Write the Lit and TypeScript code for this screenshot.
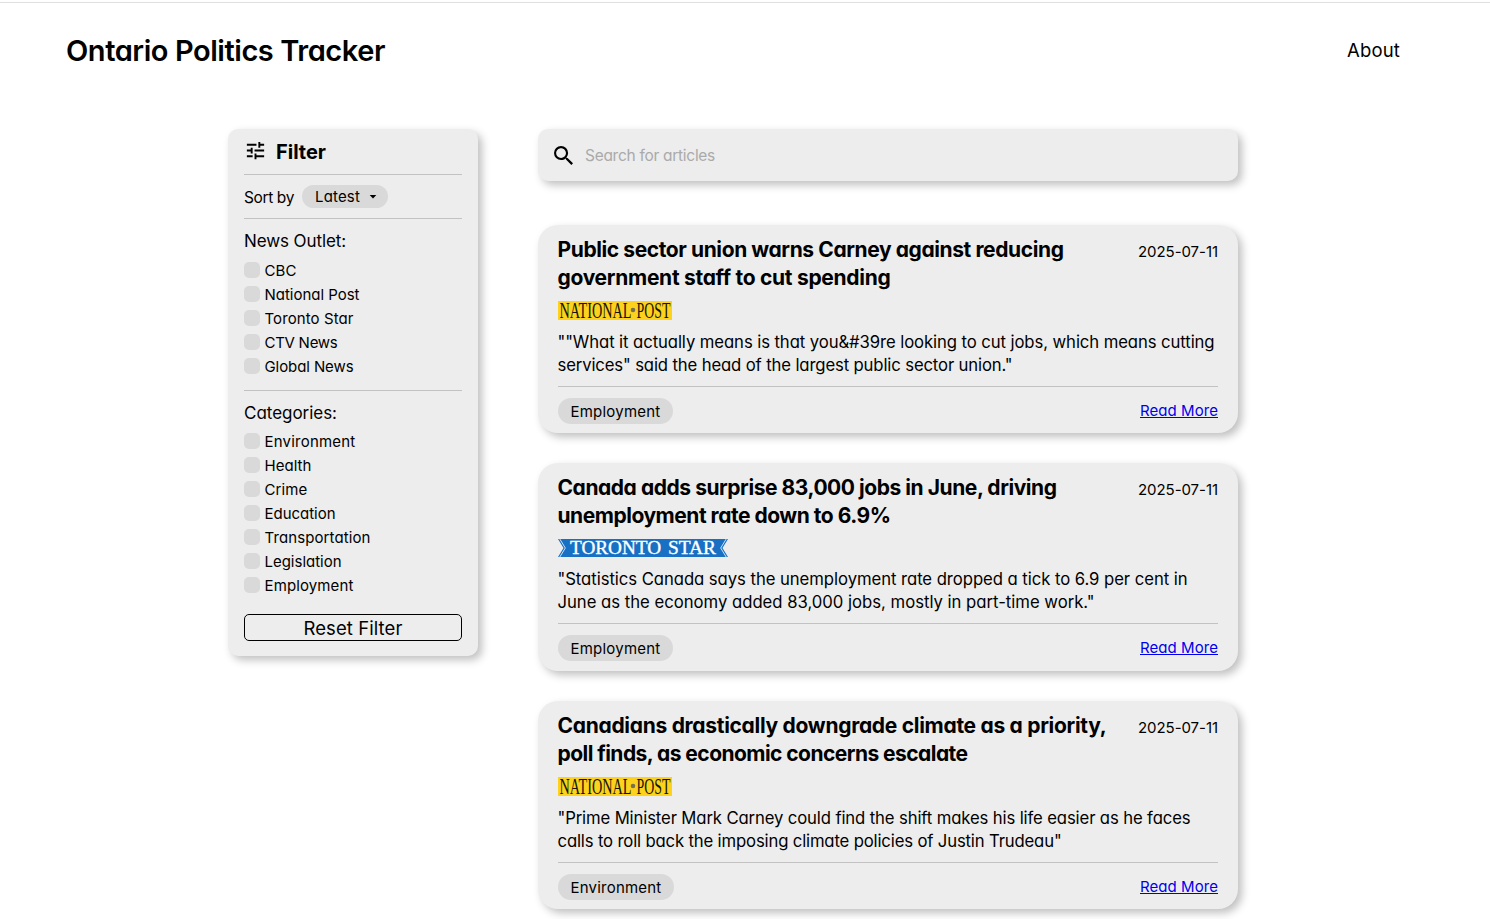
import { LitElement, html, css } from "lit";
import { customElement, property } from "lit/decorators.js";

/* One line of text set to an exact measure by adjusting its tracking. */
@customElement("fit-text")
class FitText extends LitElement {
  @property({ type: Number }) w = 0;
  @property() text = "";
  static styles = css`
    :host { display: block; white-space: nowrap; }
    .run { display: inline-block; white-space: pre; text-decoration: inherit; }
  `;
  updated() {
    const run = this.renderRoot.querySelector(".run") as HTMLElement;
    run.style.letterSpacing = "0px";
    const natural = run.getBoundingClientRect().width;
    const gap = (this.w - natural) / this.text.length;
    run.style.letterSpacing = gap.toFixed(3) + "px";
  }
  render() {
    return html`<span class="run">${this.text}</span>`;
  }
}

type Line = [string, number];
interface Article {
  title: Line[];
  outlet: "post" | "star";
  body: Line[];
  tag: Line;
}

const line = ([text, w]: Line) => html`<fit-text .text=${text} .w=${w}></fit-text>`;

const outlets: Line[] = [["CBC", 32], ["National Post", 95], ["Toronto Star", 89], ["CTV News", 73], ["Global News", 89]];
const categories: Line[] = [
  ["Environment", 91], ["Health", 47], ["Crime", 43], ["Education", 71],
  ["Transportation", 106], ["Legislation", 77], ["Employment", 89],
];
const articles: Article[] = [
  {
    title: [["Public sector union warns Carney against reducing", 506], ["government staff to cut spending", 333]],
    outlet: "post",
    body: [[`""What it actually means is that you&#39re looking to cut jobs, which means cutting`, 657], [`services" said the head of the largest public sector union."`, 455]],
    tag: ["Employment", 90],
  },
  {
    title: [["Canada adds surprise 83,000 jobs in June, driving", 499], ["unemployment rate down to 6.9%", 333]],
    outlet: "star",
    body: [[`"Statistics Canada says the unemployment rate dropped a tick to 6.9 per cent in`, 630], [`June as the economy added 83,000 jobs, mostly in part-time work."`, 537]],
    tag: ["Employment", 90],
  },
  {
    title: [["Canadians drastically downgrade climate as a priority,", 549], ["poll finds, as economic concerns escalate", 410]],
    outlet: "post",
    body: [[`"Prime Minister Mark Carney could find the shift makes his life easier as he faces`, 633], [`calls to roll back the imposing climate policies of Justin Trudeau"`, 504]],
    tag: ["Environment", 91],
  },
];

const postLogo = html`<svg class="logo" width="114" height="19" viewBox="0 0 114 19">
  <rect width="114" height="19" fill="#fcd21c"/>
  <g transform="scale(1 1.42)" fill="#16140a" font-family="Liberation Serif, serif" font-size="15.8">
    <text x="1.5" y="11.7" textLength="72" lengthAdjust="spacingAndGlyphs">NATIONAL</text>
    <text x="78.5" y="11.7" textLength="34" lengthAdjust="spacingAndGlyphs">POST</text>
  </g>
  <circle cx="75" cy="9" r="2.3" fill="#777151"/>
</svg>`;

const starLogo = html`<svg class="logo" width="170" height="18" viewBox="0 0 170 18">
  <path d="M0 0H170L164.500 9l5.500 9H0L5.500 9Z" fill="#1770c4"/>
  <path d="M1.800 0l5.500 9-5.500 9M168.200 0l-5.500 9 5.500 9" fill="none" stroke="#e4eef8" stroke-width=".9"/>
  <g fill="#fff" stroke="#fff" stroke-width=".35" font-family="Liberation Serif, serif" font-size="18">
    <text x="12" y="14.8" textLength="91" lengthAdjust="spacingAndGlyphs">TORONTO</text>
    <text x="110" y="14.8" textLength="48" lengthAdjust="spacingAndGlyphs">STAR</text>
  </g>
</svg>`;

@customElement("app-root")
class AppRoot extends LitElement {
  static styles = css`
    :host {
      display: block; height: 919px; overflow: hidden; background: #fff; color: #000;
      font-family: Inter, Lato, sans-serif; font-feature-settings: "cv11" 1;
      font-size: 15px; box-sizing: border-box; padding-top: 2px;
    }
    * { box-sizing: border-box; }
    header {
      height: 97px; border-top: 1px solid #dfdfdf; padding: 0 90px 0 66px;
      display: flex; justify-content: space-between; align-items: center;
    }
    .brand { font-size: 29px; font-weight: 600; line-height: 36px; }
    .about { font-size: 18.5px; line-height: 24px; margin-top: -2px; }
    main { display: flex; align-items: flex-start; gap: 60px; padding: 30px 0 0 228px; }
    .panel { background: #ededed; box-shadow: 4px 4px 8px rgba(0, 0, 0, .25); }
    .filter { width: 250px; height: 527px; border-radius: 10px; padding: 0 16px; }
    .head { height: 46px; display: flex; align-items: center; gap: 9px; border-bottom: 1px solid #c2c2c2; }
    .head svg { margin: -2px 0 0 0; }
    .head fit-text { font-size: 20px; font-weight: 700; }
    .sort { height: 44px; display: flex; align-items: center; gap: 8px; border-bottom: 1px solid #c2c2c2; }
    .sort > fit-text { font-size: 15.5px; padding-top: 2px; }
    .select {
      width: 86px; height: 23px; border-radius: 12px; background: #d9d9d9; margin-top: -1px;
      display: flex; align-items: center; gap: 9px; padding-left: 13px; line-height: 23px;
    }
    .select svg { margin-top: 2px; }
    .group { height: 172px; border-bottom: 1px solid #c2c2c2; padding-top: 10px; }
    .group.last { height: 223px; border: 0; }
    .label { font-size: 17px; line-height: 24px; margin-bottom: 5px; }
    .last .label { margin-bottom: 4px; }
    .check { height: 24px; display: flex; align-items: center; gap: 4.5px; line-height: 24px; }
    .box { width: 16px; height: 16px; border-radius: 5px; background: #d9d9d9; }
    .check fit-text { padding-top: 1px; }
    .reset {
      display: flex; justify-content: center; align-items: center; width: 218px; height: 27px;
      border: 1px solid #000; border-radius: 5px; background: transparent; color: #000; padding: 0;
      font: inherit; font-feature-settings: inherit; font-size: 18.5px;
    }
    .feed { width: 700px; display: flex; flex-direction: column; gap: 30px; }
    .search {
      height: 52px; border-radius: 10px; margin-bottom: 14px; padding-left: 16px;
      display: flex; align-items: center; gap: 12px; color: #aaa; font-size: 15.5px;
    }
    .search svg { color: #000; }
    .search fit-text { padding-top: 1px; }
    .card { height: 208px; border-radius: 20px; padding: 11px 20px 10px 19.5px; display: flex; flex-direction: column; }
    .top { display: flex; justify-content: space-between; }
    .title { font-size: 21px; line-height: 28px; font-weight: 700; }
    .date { line-height: 24px; padding-top: 4px; }
    .logo { display: block; margin: 9px 0 11px .5px; flex: none; overflow: visible; }
    .logo.star { margin-bottom: 11px; }
    .body { font-size: 16.7px; line-height: 23px; }
    .foot {
      margin: 9px 0 0 .5px; padding-top: 10px; border-top: 1px solid #c2c2c2;
      display: flex; justify-content: space-between; align-items: center;
    }
    .tag { height: 26px; line-height: 27px; border-radius: 13px; background: #d9d9d9; padding: 0 12.5px; }
    .more { color: #0000ee; text-decoration: underline; line-height: 27px; }
    .more fit-text { text-decoration: inherit; }
  `;
  check(l: Line) {
    return html`<div class="check"><span class="box"></span>${line(l)}</div>`;
  }
  card(a: Article) {
    return html`<article class="card panel">
      <div class="top">
        <div class="title">${a.title.map(line)}</div>
        <div class="date">${line(["2025-07-11", 80])}</div>
      </div>
      ${a.outlet === "post" ? postLogo : starLogo}
      <div class="body">${a.body.map(line)}</div>
      <div class="foot">
        <div class="tag">${line(a.tag)}</div>
        <a class="more">${line(["Read More", 78])}</a>
      </div>
    </article>`;
  }
  render() {
    return html`
      <header>
        <div class="brand">${line(["Ontario Politics Tracker", 319])}</div>
        <div class="about">${line(["About", 53])}</div>
      </header>
      <main>
        <aside class="filter panel">
          <div class="head">
            <svg width="23" height="23" viewBox="0 0 24 24"><path d="M3 17v2h6v-2H3zM3 5v2h10V5H3zm10 16v-2h8v-2h-8v-2h-2v6h2zM7 9v2H3v2h4v2h2V9H7zm14 4v-2H11v2h10zm-6-4h2V7h4V5h-4V3h-2v6z"/></svg>
            ${line(["Filter", 50])}
          </div>
          <div class="sort">
            ${line(["Sort by", 50])}
            <div class="select">${line(["Latest", 45])}
              <svg width="8" height="4" viewBox="0 0 8 4"><path d="M.7 0h6.6L4 3.5z"/></svg>
            </div>
          </div>
          <section class="group"><div class="label">${line(["News Outlet:", 102])}</div>${outlets.map((o) => this.check(o))}</section>
          <section class="group last"><div class="label">${line(["Categories:", 93])}</div>${categories.map((c) => this.check(c))}</section>
          <button class="reset">${line(["Reset Filter", 99])}</button>
        </aside>
        <div class="feed">
          <div class="search panel">
            <svg width="19" height="19" viewBox="3 3 17.5 17.5"><path d="M15.5 14h-.79l-.28-.27A6.471 6.471 0 0 0 16 9.500 6.500 6.500 0 1 0 9.500 16c1.610 0 3.090-.590 4.230-1.570l.270.280v.790l5 4.990L20.490 19l-4.990-5zm-6 0C7.010 14 5 11.990 5 9.500S7.010 5 9.500 5 14 7.010 14 9.500 11.990 14 9.500 14z"/></svg>
            ${line(["Search for articles", 130])}
          </div>
          ${articles.map((a) => this.card(a))}
        </div>
      </main>`;
  }
}
